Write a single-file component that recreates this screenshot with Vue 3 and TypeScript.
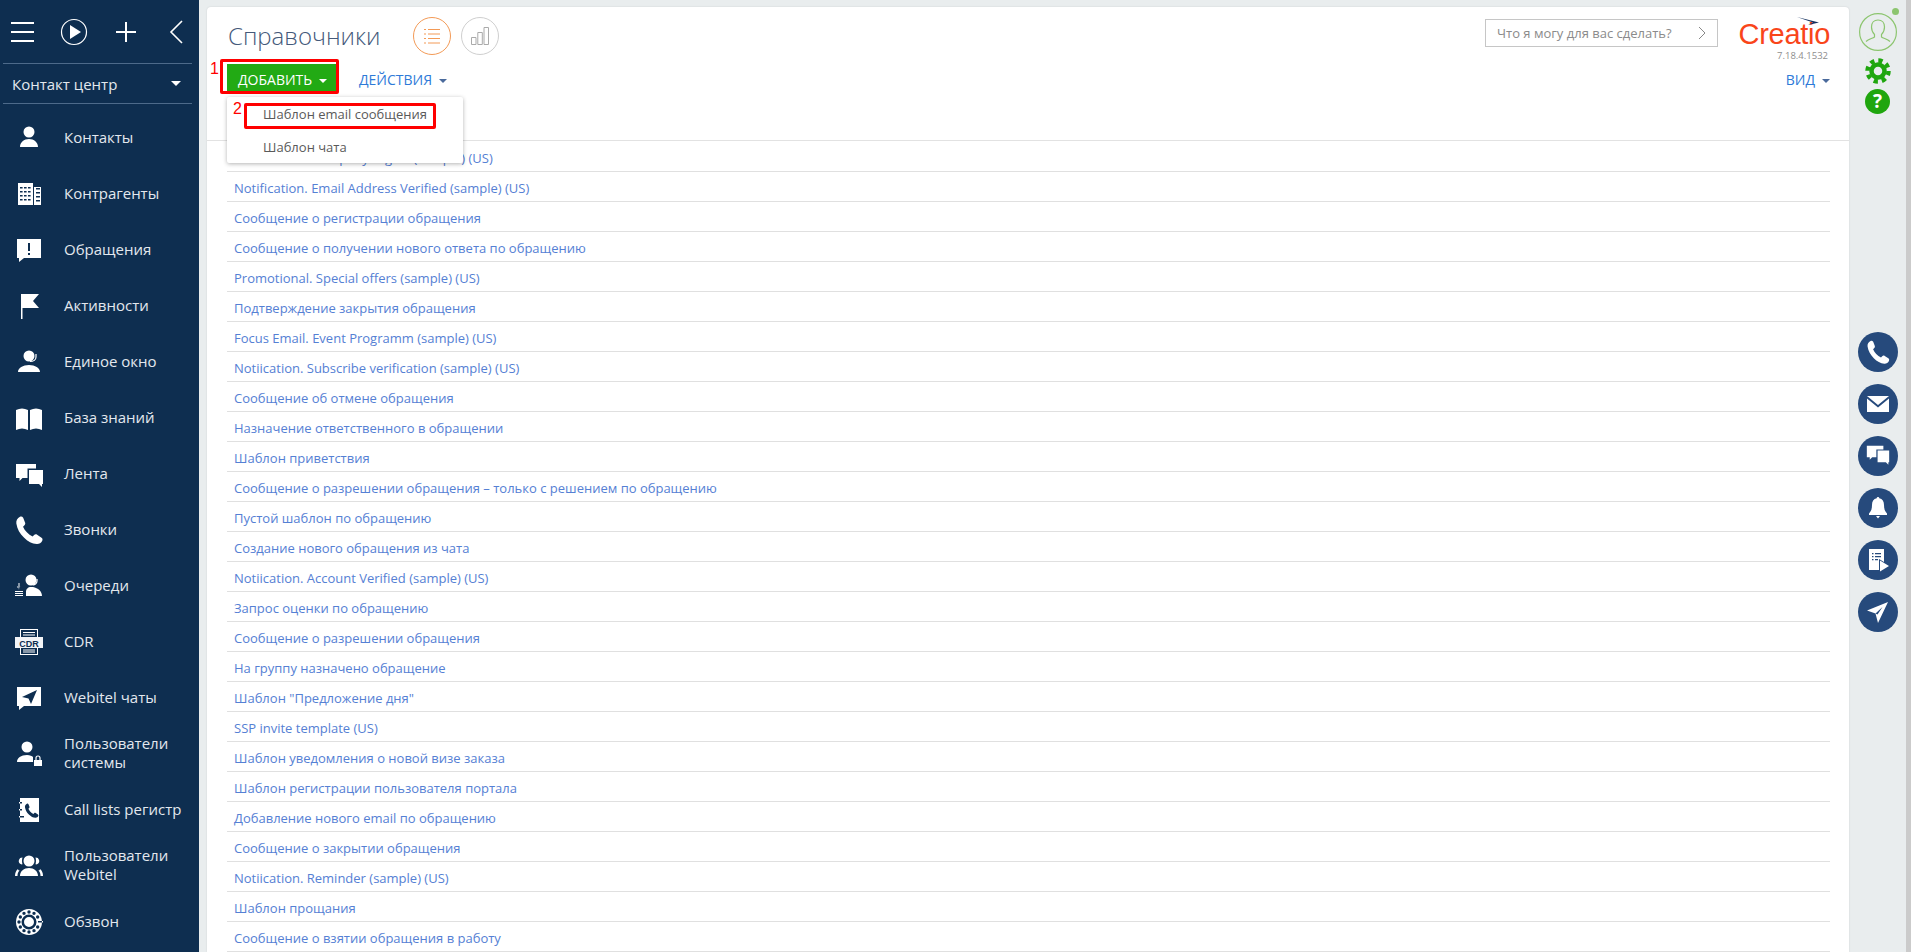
<script setup lang="ts">
interface SideIcon {
  label: string
  d: string
  stroke?: string
  innerPhone?: boolean
  cdr?: boolean
}

interface RailIcon {
  vb: string
  d: string
}

const rect = (x: number, y: number, w: number, h: number) => `M${x} ${y}h${w}v${h}h${-w}z`
const circ = (cx: number, cy: number, r: number) =>
  `M${cx - r} ${cy}a${r} ${r} 0 1 0 ${2 * r} 0a${r} ${r} 0 1 0 ${-2 * r} 0z`

const windows = () => {
  let d = ''
  for (const y of [9, 13, 17, 21]) {
    for (const x of [7, 11, 15]) d += rect(x, y, 2.6, 1.6)
    d += rect(23, y + 1, 4, 1.4)
  }
  return d
}

const dialHoles = () => {
  let d = ''
  for (let i = 1; i < 12; i++) {
    const a = (i * Math.PI) / 6
    d += circ(+(16 + 10 * Math.cos(a)).toFixed(2), +(16 + 10 * Math.sin(a)).toFixed(2), 1.7)
  }
  return d
}

const phone =
  'M8 3.500c-.5-.7-1.400-1-2.200-.6C4 4 3 5.500 3.300 7.500c.6 3.800 2.400 7 5.200 9.700 2.700 2.700 5.600 4.300 8.800 4.500 1.700.1 3-.8 3.800-2.300.4-.8.2-1.600-.5-2.100l-3-2c-.7-.5-1.500-.4-2.100.2l-1 1c-1.500-.7-2.800-1.700-4-2.900-1.100-1.200-2-2.500-2.600-3.900l1-1c.6-.6.700-1.400.3-2.100z'

const plane = 'M24 8L9 15l6.500 1.500L18 22z'

const sideItems: SideIcon[] = [
  { label: 'Контакты', d: circ(16, 10, 5.5) + 'M7 25c0-4.500 4-8 9-8s9 3.500 9 8z' },
  { label: 'Контрагенты', d: rect(5, 5, 15, 22) + rect(21, 9, 7, 18) + windows() },
  { label: 'Обращения', d: 'M4 5h24v19H11l-5 4v-4H4z' + rect(15, 9, 2, 8) + rect(15, 19, 2, 2) },
  { label: 'Активности', d: 'M8 4h18l-6 7 6 7H9.500v11H8z' },
  {
    label: 'Единое окно',
    d: circ(16, 10, 5.5) + 'M5 26c0-4 5-7 11-7s11 3 11 7z',
    stroke: 'M23 8v3c0 2.500-2.500 4.500-6 4.500'
  },
  { label: 'База знаний', d: 'M3 8c4-2 8-2 12 0v20c-4-2-8-2-12 0zM17 8c4-2 8-2 12 0v20c-4-2-8-2-12 0z' },
  {
    label: 'Лента',
    d: 'M3 6h20v4.500h-8.500V20h-5l-3 3v-3H3zM16 12h14v14h-1v3l-3-3H16z'
  },
  { label: 'Звонки', d: '' },
  {
    label: 'Очереди',
    d:
      circ(18, 10, 5.5) +
      'M13 26v-4c0-3 2-5 5-5h2c5 1 9 4 9 9z' +
      rect(2, 21, 8, 1) +
      rect(2, 23, 8, 1) +
      rect(2, 25, 8, 1) +
      rect(5.5, 13, 1, 6) +
      'M3.800 16.500h3.400L6 19.500z',
    stroke: 'M24 9v2c0 2-2 4-4 4'
  },
  {
    label: 'CDR',
    d: '',
    cdr: true
  },
  { label: 'Webitel чаты', d: 'M4 5h24v19H11l-5 4v-4H4z' + plane },
  {
    label: 'Пользователи системы',
    d: circ(14, 9, 5.5) + 'M4 24c0-4 4-7 10-7 3 0 5 1 6 2v5z' + rect(21, 22, 8, 6),
    stroke: 'M23 22v-2a2 2 0 0 1 4 0v2'
  },
  {
    label: 'Call lists регистр',
    d: rect(7, 4, 19, 24) + rect(6, 8, 3, 1.5) + rect(6, 15, 3, 1.5) + rect(6, 22, 5, 1.5),
    innerPhone: true
  },
  {
    label: 'Пользователи Webitel',
    d:
      circ(16, 11, 5.5) +
      'M7 26c0-5 4-8 9-8s9 3 9 8z' +
      'M9.500 7.500a3.500 3.500 0 0 0-2 6.500c.8.500 1.500.500 2 .3-.6-2-.7-4.800 0-6.800zM22.500 7.500a3.500 3.500 0 0 1 2 6.500c-.8.500-1.500.500-2 .3.600-2 .7-4.800 0-6.800zM2 26c0-3 1-5.500 3-7 .5 2 .5 1 1.500 1.500C5 22 4.500 24 4.500 26zM30 26c0-3-1-5.500-3-7-.5 2-.5 1-1.500 1.500 1.500 1.500 2 3.500 2 5.500z'
  },
  {
    label: 'Обзвон',
    d: circ(16, 16, 13) + circ(16, 16, 7.5) + circ(16, 16, 5) + dialHoles() + rect(25, 15, 5, 1.4)
  }
]

const railItems: RailIcon[] = [
  { vb: '2 2 20 20', d: phone },
  { vb: '0 0 24 24', d: 'M1 4h22L12 13zM1 6.500l11 9 11-9V20H1z' },
  { vb: '2 4 29 29', d: 'M3 6h20v4.500h-8.500V20h-5l-3 3v-3H3zM16 12h14v14h-1v3l-3-3H16z' },
  {
    vb: '0 0 24 24',
    d: 'M12 1c.8 0 1.300.6 1.300 1.300C16.500 3 18 5.500 18 9c0 4 1 6.500 3 8.500V19H3v-1.500C5 15.500 6 13 6 9c0-3.500 1.500-6 4.700-6.700C10.700 1.600 11.200 1 12 1zM10 20h4l-2 2.500z'
  },
  {
    vb: '0 0 24 24',
    d:
      'M3 1h15v13l-5-3v11H3z' +
      rect(6, 5, 1.5, 1.2) +
      rect(9, 5, 6, 1.2) +
      rect(6, 8, 1.5, 1.2) +
      rect(9, 8, 6, 1.2) +
      rect(6, 11, 1.5, 1.2) +
      rect(9, 11, 3, 1.2) +
      'M14 12.500l9 5.500-9 5.500z'
  },
  { vb: '0 0 24 24', d: 'M22 2L1 10.500l8.500 3L12 23zM9.500 13.500l7-6.500-5 7.500z' }
]

const rows: string[] = [
  'Notification. Company Digest (sample) (US)',
  'Notification. Email Address Verified (sample) (US)',
  'Сообщение о регистрации обращения',
  'Сообщение о получении нового ответа по обращению',
  'Promotional. Special offers (sample) (US)',
  'Подтверждение закрытия обращения',
  'Focus Email. Event Programm (sample) (US)',
  'Notiication. Subscribe verification (sample) (US)',
  'Сообщение об отмене обращения',
  'Назначение ответственного в обращении',
  'Шаблон приветствия',
  'Сообщение о разрешении обращения – только с решением по обращению',
  'Пустой шаблон по обращению',
  'Создание нового обращения из чата',
  'Notiication. Account Verified (sample) (US)',
  'Запрос оценки по обращению',
  'Сообщение о разрешении обращения',
  'На группу назначено обращение',
  'Шаблон "Предложение дня"',
  'SSP invite template (US)',
  'Шаблон уведомления о новой визе заказа',
  'Шаблон регистрации пользователя портала',
  'Добавление нового email по обращению',
  'Сообщение о закрытии обращения',
  'Notiication. Reminder (sample) (US)',
  'Шаблон прощания',
  'Сообщение о взятии обращения в работу'
]
</script>

<template>
  <div class="page">
    <aside class="sidebar">
      <div class="top-bar">
        <svg class="top-icons" viewBox="0 0 190 36" width="190" height="36">
          <path d="M11 9h23M11 18h23M11 27h23" stroke="#fff" stroke-width="2" fill="none" />
          <circle cx="74" cy="18" r="12.500" stroke="#fff" stroke-width="1.200" fill="none" />
          <path d="M70 11l11 7-11 7z" fill="#fff" />
          <path d="M116 18h20M126 8v20" stroke="#fff" stroke-width="2" fill="none" />
          <path d="M182 7l-11 11 11 11" stroke="#fff" stroke-width="1.600" fill="none" />
        </svg>
      </div>
      <div class="section-select">
        <span>Контакт центр</span>
        <i class="side-caret"></i>
      </div>
      <ul class="side-list">
        <li v-for="item in sideItems" :key="item.label" class="side-item">
          <svg class="side-icon" viewBox="0 0 32 32" width="32" height="32">
            <template v-if="item.label === 'Звонки'">
              <svg x="0" y="0" width="32" height="32" viewBox="1 1 22 22">
                <path :d="phone" fill="#fff" />
              </svg>
            </template>
            <template v-else-if="item.cdr">
              <rect x="7.500" y="3.500" width="17" height="25" fill="none" stroke="#fff" />
              <path d="M10 6.500h12M10 9h12M10 24h12M10 26h12" stroke="#fff" />
              <rect x="2" y="11" width="28" height="11" fill="#f2f4f7" />
              <text x="16" y="20.500" class="cdr-text" text-anchor="middle">CDR</text>
            </template>
            <path v-else :d="item.d" fill="#fff" fill-rule="evenodd" />
            <path v-if="item.stroke" :d="item.stroke" fill="none" stroke="#fff" stroke-width="1.200" />
            <svg v-if="item.innerPhone" x="11" y="8" width="15" height="17" viewBox="2 2 20 20">
              <path :d="phone" fill="#0e2e50" />
            </svg>
          </svg>
          <span class="side-label">{{ item.label }}</span>
        </li>
      </ul>
    </aside>

    <main class="main">
      <section class="card">
        <header class="card-head">
          <div class="head-row">
            <h1 class="title">Справочники</h1>
            <button class="view-btn active">
              <svg viewBox="0 0 16 16" width="16" height="16">
                <path
                  d="M0 1.500h2M4 1.500h12M0 6h2M4 6h12M0 10.500h2M4 10.500h12M0 15h2M4 15h12"
                  stroke="#f39a56"
                  stroke-width="1"
                  fill="none"
                />
              </svg>
            </button>
            <button class="view-btn">
              <svg viewBox="0 0 18 18" width="18" height="18">
                <path d="M.5 10.500h4.500v7H.5zM6.800 5.500h4.500v12H6.800zM13 .5h4.500v17H13z" stroke="#aaa" fill="none" />
              </svg>
            </button>
            <div class="search">
              <span>Что я могу для вас сделать?</span>
              <svg viewBox="0 0 8 14" width="8" height="14">
                <path d="M1 1l6 6-6 6" stroke="#888" fill="none" />
              </svg>
            </div>
            <div class="logo">
              <svg class="swoosh" viewBox="0 0 22 9" width="22" height="9">
                <path d="M0 0l22 5.500-11 2.500 5-2.500z" fill="#14305f" />
              </svg>
              <span class="logo-text">Creatio</span>
              <span class="version">7.18.4.1532</span>
            </div>
          </div>
          <div class="tool-row">
            <div class="add-wrap">
              <button class="add-btn">ДОБАВИТЬ<i class="caret white"></i></button>
              <span class="mark mark-add"></span>
              <span class="num num-1">1</span>
              <div class="menu">
                <div class="menu-item marked">
                  Шаблон email сообщения
                  <span class="mark mark-item"></span>
                  <span class="num num-2">2</span>
                </div>
                <div class="menu-item">Шаблон чата</div>
              </div>
            </div>
            <span class="link-btn">ДЕЙСТВИЯ<i class="caret"></i></span>
            <span class="link-btn right">ВИД<i class="caret"></i></span>
          </div>
        </header>
        <ul class="rows">
          <li v-for="row in rows" :key="row" class="row">{{ row }}</li>
        </ul>
      </section>

      <aside class="rail">
        <div class="avatar">
          <svg viewBox="0 0 38 38" width="38" height="38">
            <circle cx="19" cy="19" r="18.400" fill="none" stroke="#8cc56f" stroke-width="1.200" />
            <path
              d="M19 7c-4 0-6.500 3-6.500 7 0 3 1 5.500 3 7.500v2.500c-2 1.500-6 2-8.500 4.500M19 7c4 0 6.500 3 6.500 7 0 3-1 5.500-3 7.500v2.500c2 1.500 6 2 8.500 4.500"
              fill="none"
              stroke="#8cc56f"
              stroke-width="1.200"
            />
          </svg>
          <i class="status"></i>
        </div>
        <svg class="gear" viewBox="0 0 26 26" width="26" height="26">
          <circle cx="13" cy="13" r="10.500" fill="none" stroke="#1fa60e" stroke-width="4.500" stroke-dasharray="4.250 4" />
          <circle cx="13" cy="13" r="6.500" fill="none" stroke="#1fa60e" stroke-width="4.500" />
        </svg>
        <div class="help">?</div>
        <div class="rail-list">
          <div v-for="(btn, i) in railItems" :key="i" class="rail-btn">
            <svg :viewBox="btn.vb" width="24" height="24">
              <path :d="btn.d" fill="#fff" fill-rule="evenodd" />
            </svg>
          </div>
        </div>
      </aside>
      <div class="scrollbar"></div>
    </main>
  </div>
</template>

<style>
html,
body {
  margin: 0;
  overflow: hidden;
}
</style>

<style scoped>
.page {
  display: flex;
  height: 952px;
  font-family: "Open Sans", "Liberation Sans", sans-serif;
  overflow: hidden;
}
.sidebar {
  width: 199px;
  flex: none;
  background: #0e2e50;
  color: #e3e8ee;
}
.top-bar {
  height: 63px;
  margin: 0 7px 0 3px;
  border-bottom: 1px solid #4d6a8a;
  box-sizing: content-box;
  position: relative;
}
.top-icons {
  display: block;
  margin-left: -3px;
  padding-top: 14px;
}
.section-select {
  height: 39px;
  margin: 0 7px 0 3px;
  padding: 0 11px 0 9px;
  border-bottom: 1px solid #4d6a8a;
  display: flex;
  align-items: center;
  justify-content: space-between;
  font-size: 15px;
}
.side-caret {
  border: 5px solid transparent;
  border-top: 5px solid #fff;
  border-bottom: 0;
}
.side-list {
  list-style: none;
  margin: 6px 0 0;
  padding: 0;
}
.side-item {
  height: 56px;
  display: flex;
  align-items: center;
}
.side-icon {
  flex: none;
  margin-left: 13px;
  overflow: visible;
}
.side-label {
  margin: 0 0 2px 19px;
  width: 130px;
  font-size: 15px;
  line-height: 19px;
}
.cdr-text {
  font: bold 9px "Liberation Sans", sans-serif;
  fill: #0e2e50;
}
.main {
  flex: 1;
  display: flex;
  background: #e9edee;
  padding: 7px 0 0 8px;
  min-width: 0;
}
.card {
  flex: 1;
  min-width: 0;
  background: #fff;
  border-radius: 4px 4px 0 0;
  box-shadow: 0 0 2px rgba(0, 0, 0, 0.12);
}
.card-head {
  height: 133px;
  border-bottom: 1px solid #e2e2e2;
}
.head-row {
  height: 57px;
  padding: 12px 19px 0 21px;
  box-sizing: border-box;
  display: flex;
  align-items: flex-start;
}
.title {
  margin: 0 33px 0 0;
  font-size: 24px;
  font-weight: 300;
  line-height: 34px;
  color: #44597a;
}
.view-btn {
  width: 38px;
  height: 38px;
  margin: -2px 10px 0 0;
  padding: 0;
  background: #fff;
  border: 1px solid #cfcfcf;
  border-radius: 50%;
  display: flex;
  align-items: center;
  justify-content: center;
}
.view-btn.active {
  border-color: #f39a56;
}
.search {
  margin-left: auto;
  width: 233px;
  height: 28px;
  box-sizing: border-box;
  border: 1px solid #c6c6c6;
  padding: 0 11px;
  display: flex;
  align-items: center;
  justify-content: space-between;
  font-size: 13px;
  color: #8b8b8b;
}
.logo {
  position: relative;
  width: 92px;
  margin-left: 20px;
  display: flex;
  flex-direction: column;
  align-items: flex-end;
}
.swoosh {
  position: absolute;
  top: -2px;
  left: 59px;
}
.logo-text {
  font-family: "Liberation Sans", sans-serif;
  font-size: 29px;
  line-height: 30px;
  letter-spacing: -0.3px;
  color: #f9451a;
}
.version {
  margin: 0 2px 0 0;
  font-size: 9.5px;
  line-height: 14px;
  color: #8e8e8e;
}
.tool-row {
  display: flex;
  align-items: center;
  height: 28px;
  padding: 0 19px 0 20px;
}
.add-wrap {
  position: relative;
  height: 28px;
  margin-right: 22px;
}
.add-btn {
  height: 28px;
  width: 110px;
  padding: 2px 0 0 11px;
  border: 0;
  text-align: left;
  background: #22aa14;
  color: #fff;
  font: 14px "Open Sans", sans-serif;
}
.caret {
  display: inline-block;
  margin-left: 7px;
  vertical-align: 2px;
  border: 4px solid transparent;
  border-top: 4px solid #4a6a9c;
  border-bottom: 0;
}
.caret.white {
  border-top-color: #fff;
}
.link-btn {
  padding-top: 2px;
  font-size: 14px;
  color: #2e7ad8;
}
.link-btn.right {
  margin-left: auto;
}
.mark {
  position: absolute;
  border: 3px solid #f00;
  border-radius: 2px;
  box-sizing: border-box;
  pointer-events: none;
}
.mark-add {
  left: -7px;
  top: -5px;
  width: 119px;
  height: 35px;
}
.num {
  position: absolute;
  color: #f00;
  font: 16px/21px "Liberation Sans", sans-serif;
}
.num-1 {
  left: -17px;
  top: -6px;
}
.num-2 {
  left: 6px;
  top: -5px;
}
.menu {
  position: absolute;
  left: 0;
  top: 33px;
  width: 236px;
  height: 66px;
  padding-top: 6px;
  box-sizing: border-box;
  background: #fff;
  border-radius: 2px;
  box-shadow: 0 1px 4px rgba(0, 0, 0, 0.3);
  z-index: 2;
}
.menu-item {
  position: relative;
  height: 27px;
  margin-bottom: 6px;
  padding-left: 36px;
  font-size: 13px;
  line-height: 22px;
  color: #5a5a5a;
}
.mark-item {
  left: 17px;
  top: 0;
  width: 192px;
  height: 26px;
}
.rows {
  list-style: none;
  margin: 0;
  padding: 1px 19px 0 20px;
}
.row {
  height: 30px;
  box-sizing: border-box;
  border-bottom: 1px solid #e0e0e0;
  padding: 3px 0 0 7px;
  font-size: 13px;
  line-height: 26px;
  color: #5580d4;
}
.rail {
  width: 57px;
  flex: none;
  display: flex;
  flex-direction: column;
  align-items: center;
  padding-top: 6px;
  box-sizing: border-box;
}
.avatar {
  position: relative;
  height: 38px;
}
.avatar svg {
  display: block;
}
.status {
  position: absolute;
  right: -2px;
  top: -5px;
  width: 7px;
  height: 7px;
  border-radius: 50%;
  background: #8cc56f;
}
.gear {
  display: block;
  margin-top: 7px;
}
.help {
  width: 25px;
  height: 25px;
  margin-top: 5px;
  border-radius: 50%;
  background: #1fa60e;
  color: #fff;
  font-size: 19px;
  font-weight: 700;
  line-height: 25px;
  text-align: center;
}
.rail-list {
  margin-top: 218px;
  display: flex;
  flex-direction: column;
  gap: 12px;
}
.rail-btn {
  width: 40px;
  height: 40px;
  border-radius: 50%;
  background: #264a7c;
  display: flex;
  align-items: center;
  justify-content: center;
}
.scrollbar {
  width: 5px;
  flex: none;
  margin-top: -7px;
  background: #cbcbcb;
}
</style>
